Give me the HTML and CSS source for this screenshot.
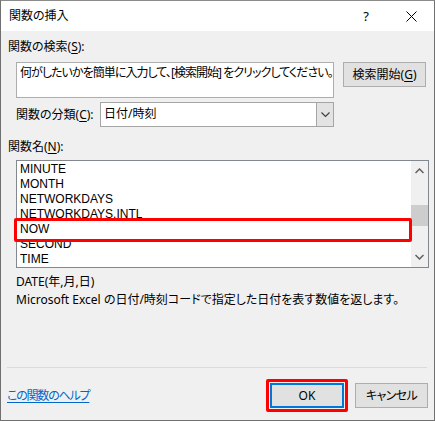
FILE: index.html
```html
<!DOCTYPE html>
<html lang="ja">
<head>
<meta charset="utf-8">
<title>関数の挿入</title>
<link rel="stylesheet" href="styles.css">
</head>
<body>
<div class="window">
  <div class="titlebar">
    <span class="title">関数の挿入</span>
    <span class="help">?</span>
    <svg class="close" width="11" height="11" viewBox="0 0 11 11"><path d="M0.5 0.5 L10.5 10.5 M10.5 0.5 L0.5 10.5" stroke="#000" stroke-width="1" fill="none"/></svg>
  </div>
  <div class="content">
    <div class="label">関数の検索(<u>S</u>):</div>
    <div class="search-row">
      <div class="searchbox">何がしたいかを簡単に入力して、[検索開始] をクリックしてください。</div>
      <button class="btn search-btn">検索開始(<u>G</u>)</button>
    </div>
    <div class="category-row">
      <span class="cat-label">関数の分類(<u>C</u>):</span>
      <div class="combo">
        <span class="combo-text">日付/時刻</span>
        <span class="combo-arrow">
          <svg width="9" height="6" viewBox="0 0 9 6"><path d="M0.5 0.5 L4.5 4.5 L8.5 0.5" stroke="#404040" stroke-width="1.2" fill="none"/></svg>
        </span>
      </div>
    </div>
    <div class="label name-label">関数名(<u>N</u>):</div>
    <div class="listbox">
      <ul class="items">
        <li>MINUTE</li>
        <li>MONTH</li>
        <li>NETWORKDAYS</li>
        <li>NETWORKDAYS.INTL</li>
        <li class="selected">NOW</li>
        <li>SECOND</li>
        <li>TIME</li>
      </ul>
      <div class="scrollbar">
        <svg class="arrow" width="9" height="6" viewBox="0 0 9 6"><path d="M0.5 5 L4.5 1 L8.5 5" stroke="#606060" stroke-width="1.5" fill="none"/></svg>
        <div class="track"><div class="thumb"></div></div>
        <svg class="arrow" width="9" height="6" viewBox="0 0 9 6"><path d="M0.5 1 L4.5 5 L8.5 1" stroke="#606060" stroke-width="1.5" fill="none"/></svg>
      </div>
      <div class="highlight"></div>
    </div>
    <div class="syntax">DATE(年,月,日)</div>
    <div class="desc">Microsoft Excel の日付/時刻コードで指定した日付を表す数値を返します。</div>
    <div class="spacer"></div>
    <div class="separator"></div>
    <div class="footer">
      <a class="help-link" href="#">この関数のヘルプ</a>
      <div class="buttons">
        <div class="ok-wrap"><button class="btn ok">OK</button></div>
        <button class="btn cancel">キャンセル</button>
      </div>
    </div>
  </div>
</div>
</body>
</html>
```

FILE: styles.css
```css
* { box-sizing: border-box; }

html, body {
  margin: 0;
  padding: 0;
  background: #ffffff;
}

body {
  font-family: "Noto Sans", "Noto Sans CJK JP", sans-serif;
  font-size: 12px;
  color: #000;
  font-feature-settings: "palt";
}

u { text-decoration-thickness: 1px; text-underline-offset: 2px; }

.window {
  width: 435px;
  height: 421px;
  border: 1px solid #707070;
  border-top-color: #8a8a8a;
  display: flex;
  flex-direction: column;
  background: #f0f0f0;
}

.titlebar {
  height: 30px;
  background: #ffffff;
  display: flex;
  align-items: center;
  padding: 0 17px 0 8px;
  flex: none;
}

.title {
  flex: 1;
  line-height: 16px;
  padding-bottom: 1px;
}

.help {
  font-size: 13px;
  line-height: 16px;
  margin-right: 37px;
  padding-bottom: 1px;
}

.close { display: block; }

.content {
  flex: 1;
  display: flex;
  flex-direction: column;
  padding: 8px 6px 8px 7px;
}

.label {
  line-height: 16px;
}

.search-row {
  display: flex;
  align-items: flex-start;
  margin: 7px 0 0 8px;
}

.searchbox {
  width: 318px;
  height: 36px;
  background: #fff;
  border: 1px solid #adadad;
  padding: 2px 3px;
  line-height: 16px;
  letter-spacing: -0.95px;
  white-space: nowrap;
  overflow: hidden;
}

.btn {
  font-family: inherit;
  font-size: 12px;
  font-feature-settings: "palt";
  color: #000;
  background: #e1e1e1;
  border: 1px solid #adadad;
  padding: 0;
  margin: 0;
  line-height: 16px;
}

.search-btn {
  margin-left: 9px;
  width: 83px;
  height: 25px;
  white-space: nowrap;
}

.category-row {
  display: flex;
  align-items: center;
  margin: 4px 0 0 8px;
}

.cat-label {
  width: 84px;
  line-height: 16px;
}

.combo {
  width: 234px;
  height: 25px;
  display: flex;
  border: 1px solid #a5a5a5;
  background: #fff;
}

.combo-text {
  flex: 1;
  padding-left: 3px;
  line-height: 22px;
}

.combo-arrow {
  width: 17px;
  background: #e3e3e3;
  border-left: 1px solid #a5a5a5;
  display: flex;
  align-items: center;
  justify-content: center;
}

.name-label {
  margin-top: 12px;
}

.listbox {
  position: relative;
  margin: 5px 0 0 8px;
  width: 413px;
  height: 108px;
  border: 1px solid #828790;
  background: #fff;
  display: flex;
}

.items {
  list-style: none;
  margin: 0;
  padding: 1px 0 0 3px;
  flex: 1;
  overflow: hidden;
}

.items li {
  height: 15px;
  line-height: 15px;
  font-family: "Liberation Sans", "Noto Sans", sans-serif;
  font-size: 12px;
  white-space: nowrap;
  overflow: hidden;
}

.scrollbar {
  width: 17px;
  background: #f0f0f0;
  display: flex;
  flex-direction: column;
  align-items: center;
  padding: 7px 0;
}

.scrollbar .arrow { flex: none; }

.track {
  flex: 1;
  width: 17px;
  padding-top: 31px;
}

.thumb {
  height: 21px;
  background: #cdcdcd;
}

/* red marker drawn over the NOW row */
.highlight {
  position: absolute;
  left: -3px;
  top: 57px;
  width: 398px;
  height: 24px;
  border: 3px solid #ff0000;
  border-radius: 2px;
  pointer-events: none;
}

.syntax {
  margin: 5px 0 0 8px;
  line-height: 18px;
}

.desc {
  margin-left: 8px;
  line-height: 18px;
}

.spacer { flex: 1; }

.separator {
  height: 1px;
  background: #dadada;
  width: 420px;
  margin-left: -1px;
}

.footer {
  display: flex;
  align-items: center;
  justify-content: space-between;
  margin-top: 11px;
  padding-right: 0;
}

.help-link {
  color: #0066cc;
  text-decoration: underline;
  text-underline-offset: 2px;
  line-height: 16px;
  letter-spacing: -1.2px;
  margin-left: -1px;
}

.buttons {
  display: flex;
  align-items: center;
}

.ok-wrap {
  border: 3px solid #ff0000;
  border-radius: 2px;
  padding: 1px;
}

.ok {
  width: 74px;
  height: 25px;
  border: 2px solid #0078d7;
}

.cancel {
  margin-left: 7px;
  width: 73px;
  height: 25px;
  letter-spacing: -0.6px;
}
```
